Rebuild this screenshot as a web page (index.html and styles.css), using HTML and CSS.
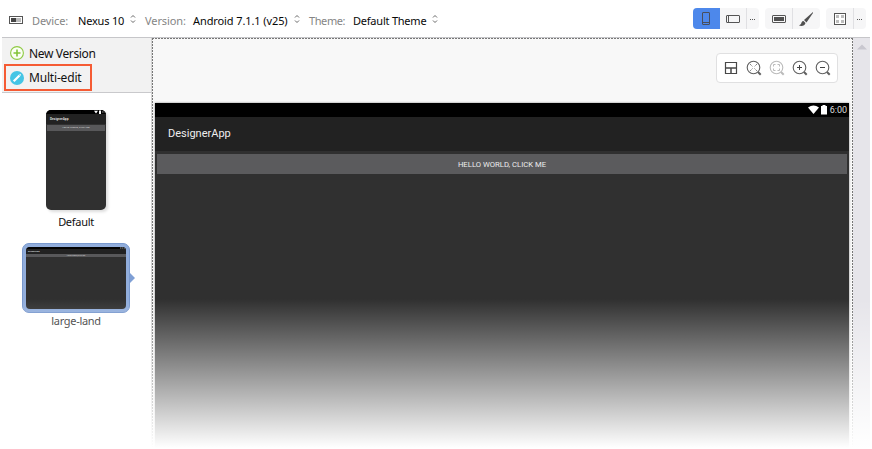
FILE: index.html
```
<!DOCTYPE html>
<html lang="en">
<head>
<meta charset="utf-8">
<title>DesignerApp</title>
<link rel="stylesheet" href="styles.css">
</head>
<body>
<div class="window">
  <header class="toolbar">
    <div class="selectors">
      <svg class="device-icon" width="14" height="8" viewBox="0 0 14 8"><rect x=".5" y=".5" width="13" height="7" fill="#fff" stroke="#555"/><path d="M2 2h5v4H2z" fill="#444"/><path d="M7 2h5v4H7z" fill="#bbb"/></svg>
      <span class="label device">Device:</span><span class="value nexus">Nexus 10</span>
      <svg class="caret" width="6" height="8" viewBox="0 0 6 8"><path d="M1 2.500l2-2 2 2M1 5.500l2 2 2-2" fill="none" stroke="#666"/></svg>
      <span class="label version">Version:</span><span class="value android">Android 7.1.1 (v25)</span>
      <svg class="caret" width="6" height="8" viewBox="0 0 6 8"><path d="M1 2.500l2-2 2 2M1 5.500l2 2 2-2" fill="none" stroke="#666"/></svg>
      <span class="label theme">Theme:</span><span class="value default-theme">Default Theme</span>
      <svg class="caret" width="6" height="8" viewBox="0 0 6 8"><path d="M1 2.500l2-2 2 2M1 5.500l2 2 2-2" fill="none" stroke="#666"/></svg>
    </div>
    <div class="groups">
      <div class="group orientation">
        <button class="active"><svg width="27" height="21" viewBox="0 0 27 21"><rect x="9.500" y="4.500" width="7" height="12" rx=".5" fill="none" stroke="#494f5c"/><path d="M10 14.500h6" stroke="#494f5c"/></svg></button>
        <button><svg width="26" height="21" viewBox="0 0 26 21"><rect x="6.500" y="7.500" width="13" height="7" rx=".5" fill="none" stroke="#555"/><path d="M8.500 8v6" stroke="#555"/></svg></button>
        <button class="more"><svg width="12" height="21" viewBox="0 0 12 21"><path d="M3 11.500h1m1 0h1m1 0h1" stroke="#555" stroke-width="1.200"/></svg></button>
      </div>
      <div class="group tools">
        <button><svg width="27" height="21" viewBox="0 0 27 21"><rect x="7.500" y="7.500" width="13" height="7" rx=".5" fill="none" stroke="#555"/><path d="M9 9h10v4H9z" fill="#505050"/></svg></button>
        <button><svg width="27" height="21" viewBox="0 0 27 21"><path d="M20 4l-9 8 2.500 2.500L20 5z" fill="#505050"/><path d="M10.500 13c-2 0-2 2-2.500 3l-2 1.500c3 1 6 0 6.500-2.500z" fill="#505050"/></svg></button>
      </div>
      <div class="group grid-tools">
        <button><svg width="27" height="21" viewBox="0 0 27 21"><rect x="8.500" y="5.500" width="11" height="11" fill="#fff" stroke="#555"/><path d="M10 7h3v3h-3zM15 7h3v3h-3zM10 12h3v3h-3zM15 12h3v3h-3z" fill="#bdbdbd"/></svg></button>
        <button class="more"><svg width="12" height="21" viewBox="0 0 12 21"><path d="M3 11.500h1m1 0h1m1 0h1" stroke="#555" stroke-width="1.200"/></svg></button>
      </div>
    </div>
  </header>
  <main class="workspace">
    <aside class="sidebar">
      <nav class="actions">
        <div class="action"><svg width="14" height="14" viewBox="0 0 14 14"><circle cx="7" cy="7" r="6.400" fill="#fbfff5" stroke="#8fca43" stroke-width="1.100"/><path d="M7 3.500v7M3.500 7h7" stroke="#83c438" stroke-width="1.600"/></svg><span class="new-version">New Version</span></div>
        <div class="action highlighted"><svg width="14" height="14" viewBox="0 0 14 14"><circle cx="7" cy="7" r="7" fill="#45c5e5"/><path d="M3.700 10.300l5.800-5.800" stroke="#fff" stroke-width="2.200"/><path d="M9.800 4.200l.8-.8" stroke="#fff" stroke-width="1.600"/></svg><span class="multi-edit">Multi-edit</span></div>
      </nav>
      <div class="previews">
        <div class="thumb portrait">
          <div class="mini-status"><svg width="18" height="4" viewBox="0 0 18 4"><path d="M6 .8h4L8 3.500z" fill="#fff"/><path d="M11 .5h2V4h-2z" fill="#fff"/><path d="M14 2h3" stroke="#888" stroke-dasharray="1 .4"/></svg></div>
          <div class="mini-title">DesignerApp</div><div class="mini-button">HELLO WORLD, CLICK ME</div>
        </div>
        <div class="caption default">Default</div>
        <div class="selected-frame"><div class="thumb landscape">
          <div class="mini-status"><svg width="6" height="2" viewBox="0 0 6 2"><path d="M0 1h5" stroke="#999" stroke-dasharray="1.500 .4"/></svg></div><div class="mini-title">DesignerApp</div><div class="mini-button">HELLO WORLD, CLICK ME</div>
        </div></div>
        <div class="caption land">large-land</div>
      </div>
    </aside>
    <section class="canvas">
      <svg class="outline" width="701" height="411"><path d="M0 .5h701M.5 0v411M700.500 0v411" fill="none" stroke="#777" stroke-dasharray="2 1"/></svg>
      <div class="zoom-panel">
        <svg viewBox="0 0 16 16"><path d="M2.500 2.500h11v11h-11z" fill="none" stroke="#484848" stroke-width="1.200"/><path d="M2 8h12M8 8v6" stroke="#484848" stroke-width="1.500"/></svg>
        <svg viewBox="0 0 16 16"><circle cx="7.500" cy="7.500" r="6.300" fill="none" stroke="#606060" stroke-width="1.100"/><path d="M12 12l2.700 2.700" stroke="#606060" stroke-width="2"/><path d="M4 4l2.500 2.500m2 2L11 11m0-7L8.500 6.500m-2 2L4 11" stroke="#666" stroke-width=".9" stroke-dasharray="1.300 .7"/></svg>
        <svg viewBox="0 0 16 16"><circle cx="7.500" cy="7.500" r="6.300" fill="none" stroke="#bbb" stroke-width="1.100"/><path d="M12 12l2.700 2.700" stroke="#bbb" stroke-width="2"/><path d="M4.500 6.500v-2h2m2 0h2v2m0 2v2h-2m-2 0h-2v-2" fill="none" stroke="#bbb"/></svg>
        <svg viewBox="0 0 16 16"><circle cx="7.500" cy="7.500" r="6.300" fill="none" stroke="#606060" stroke-width="1.100"/><path d="M12 12l2.700 2.700" stroke="#606060" stroke-width="2"/><path d="M5 7.500h5M7.500 5v5" stroke="#444"/></svg>
        <svg viewBox="0 0 16 16"><circle cx="7.500" cy="7.500" r="6.300" fill="none" stroke="#606060" stroke-width="1.100"/><path d="M12 12l2.700 2.700" stroke="#606060" stroke-width="2"/><path d="M5 7.500h5" stroke="#444"/></svg>
      </div>
      <div class="device-screen">
        <div class="status"><svg width="20" height="10" viewBox="0 0 20 10"><path d="M0 2.500Q5.500-1.500 11 2.500L5.500 9z" fill="#fff"/><path d="M13 1h1.500V0h3v1H19v8.500h-6z" fill="#fff"/></svg><span>6:00</span></div>
        <div class="appbar">DesignerApp</div>
        <div class="click-button">HELLO WORLD, CLICK ME</div>
      </div>
    </section>
    <div class="scrollbar"><svg width="10" height="6" viewBox="0 0 10 6"><path d="M0 5.500L5 .5l5 5z" fill="#c8c7cf"/></svg></div>
  </main>
  <div class="fade"></div>
</div>
</body>
</html>
```
FILE: styles.css
```
* { box-sizing: border-box; }
body { margin: 0; background: #fff; font-family: "Noto Sans", "Open Sans", sans-serif; color: #111; }
svg { display: block; flex: none; }
.window { position: relative; width: 872px; height: 449px; padding: 0 2px; overflow: hidden; }
.toolbar { height: 38px; display: flex; justify-content: space-between; border-bottom: 1px solid #c6c6c9; }
.selectors { display: flex; align-items: center; height: 20px; margin: 10px 0 0 7px; font-size: 11px; white-space: nowrap; }
.caret { margin-top: -2px; }
.label { color: #858585; }
.value { color: #080808; }
.device { width: 46px; margin-left: 9px; letter-spacing: -.1px; }
.nexus { width: 52px; letter-spacing: -.2px; }
.version { width: 48px; margin-left: 9px; letter-spacing: -.1px; }
.android { width: 101px; letter-spacing: -.1px; }
.theme { width: 44px; margin-left: 9px; letter-spacing: -.4px; }
.default-theme { width: 79px; letter-spacing: -.22px; }
.groups { display: flex; gap: 6px; margin: 8px 4px 0 0; height: 21px; }
.group { display: flex; background: #f6f6f7; border-radius: 4px; overflow: hidden; }
.group button { border: 0; padding: 0; background: none; }
.group button + button { border-left: 1px solid #e0e0e3; }
.group .active { background: #4d88eb; }
.group .active + button { border-left: 0; }
.workspace { display: flex; height: 411px; }
.sidebar { width: 150px; border-right: 1px solid #d5d5d5; }
.actions { height: 55px; padding: 4px 2px; background: #f2f2f2; border-bottom: 1px solid #c9c9cc; }
.action { display: flex; align-items: center; gap: 5px; height: 22px; padding-left: 6px; font-size: 12px; white-space: nowrap; letter-spacing: -.35px; }
.highlighted { width: 88px; height: 27px; border: 2px solid #f55b34; padding-left: 4px; }
.multi-edit { letter-spacing: -.18px; }
.previews { display: flex; flex-direction: column; align-items: center; padding: 17px 1px 0 0; }
.thumb { background: #303030; overflow: hidden; color: #ddd; }
.portrait { width: 60px; height: 100px; border-radius: 5px; box-shadow: 2px 2px 3px #ddd; }
.mini-status { height: 4px; background: #000; display: flex; justify-content: flex-end; }
.mini-title { height: 10px; padding-left: 4px; background: #222; font: bold 3.2px/10px Roboto, sans-serif; }
.mini-button { height: 6px; margin: 1px; background: #58585a; text-align: center; font: 2.400px/6px Roboto, sans-serif; }
.caption { font-size: 11px; line-height: 16px; letter-spacing: -.3px; }
.default { margin-top: 4px; }
.selected-frame { position: relative; width: 108px; height: 70px; margin-top: 13px; padding: 3px; background: #91addb; border: 1px solid #7898cd; border-radius: 7px; }
.selected-frame::after { content: ""; position: absolute; right: -6px; top: 29px; border: 5px solid transparent; border-left-color: #7f9fd5; border-right: 0; }
.landscape { width: 100px; height: 62px; border-radius: 4px; }
.landscape .mini-status { height: 2px; }
.landscape .mini-title { height: 5px; padding-left: 2px; font-size: 2px; line-height: 5px; }
.landscape .mini-button { height: 3px; margin: 0; font-size: 1.600px; line-height: 3px; }
.land { color: #333; }
.canvas { position: relative; width: 701px; background: #f8f8f8; }
.outline { position: absolute; top: 0; left: 0; }
.zoom-panel { display: flex; align-items: center; gap: 7px; width: 122px; height: 30px; margin: 15px 0 0 564px; padding-left: 6px; background: #fff; border: 1px solid #e0e0e1; border-radius: 4px; }
.zoom-panel svg { width: 16px; height: 16px; }
.device-screen { width: 694px; height: 346px; margin: 20px 0 0 3px; background: #303030; box-shadow: 0 0 2px #888; }
.status { height: 14px; background: #000; display: flex; align-items: center; justify-content: flex-end; gap: 2px; padding-right: 2px; color: #ddd; font: 9px/14px Roboto, sans-serif; }
.appbar { height: 34px; padding-left: 13px; background: #222; color: #eee; font: 11px/34px Roboto, sans-serif; }
.click-button { height: 20px; margin: 3px 2px 0; background: #5b5b5d; color: #eee; font: 7.700px/21px Roboto, sans-serif; text-align: center; }
.scrollbar { width: 17px; padding: 6px 0 0 4px; background: #e6e5ea; }
.fade { position: absolute; left: 0; right: 0; top: 299px; bottom: 0; background: linear-gradient(rgba(255,255,255,0), #fff 149px); pointer-events: none; }
```
